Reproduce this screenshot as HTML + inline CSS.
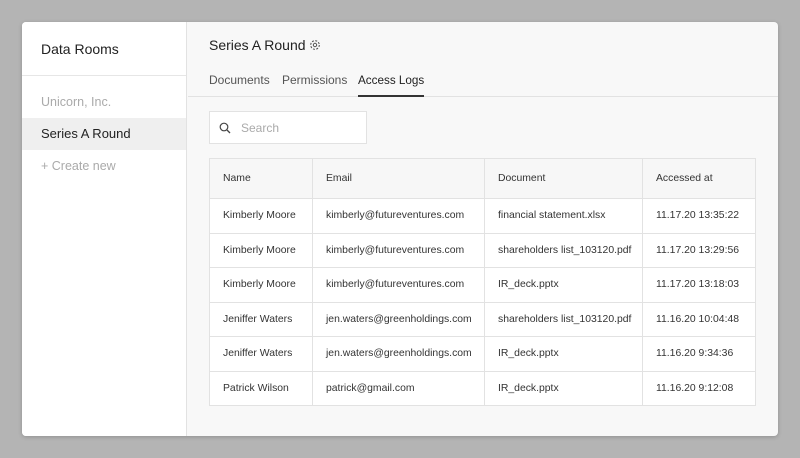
<!DOCTYPE html>
<html><head><style>
*{box-sizing:border-box;margin:0;padding:0}
body{width:800px;height:458px;background:#b4b4b4;font-family:"Liberation Sans",sans-serif;position:relative;overflow:hidden;color:#333}
.card{position:absolute;left:22px;top:22px;width:756px;height:414px;background:#f8f8f8;border-radius:4px;overflow:hidden;box-shadow:0 1px 4px rgba(0,0,0,.2)}
.side{position:absolute;left:0;top:0;width:165px;height:100%;background:#fff;border-right:1px solid #e2e2e2}
.side .h{height:54px;border-bottom:1px solid #e6e6e6;padding:19px 0 0 19px;font-size:14px;color:#222}
.side .i{height:32px;padding-left:19px;line-height:32px;font-size:12.5px}
.main{position:absolute;left:166px;top:0;right:0;height:100%}
.title{position:absolute;left:21px;top:15px;font-size:14px;color:#222}
.tabs{position:absolute;left:0;right:0;top:50px;height:25px;border-bottom:1px solid #e2e2e2}
.tab{position:absolute;top:0;height:25px;padding-top:1px;font-size:12px;line-height:14px;color:#555}
.search{position:absolute;left:21px;top:89px;width:158px;height:33px;background:#fff;border:1px solid #e2e2e2}
.search span{position:absolute;left:31px;top:9px;font-size:12px;color:#aaa}
table{position:absolute;left:21px;top:136px;width:547px;border-collapse:collapse;background:#fff;font-size:10.4px;color:#333;table-layout:fixed}
td{border:1px solid #e2e2e2;padding:0 0 0 13px;height:34.5px;white-space:nowrap;overflow:hidden}
tr.hd td{background:#f7f7f7;height:40px}
</style></head><body>
<div class="card">
<div class="side">
<div class="h">Data Rooms</div>
<div style="height:10px"></div>
<div class="i" style="color:#aaa">Unicorn, Inc.</div>
<div class="i" style="background:#efefef;color:#222;font-size:13px">Series A Round</div>
<div class="i" style="color:#aaa">+ Create new</div>
</div>
<div class="main">
<div class="title">Series A Round <svg width="12" height="12" viewBox="0 0 12 12" style="vertical-align:-1px"><circle cx="6" cy="6" r="4.3" fill="none" stroke="#555" stroke-width="1.1" stroke-dasharray="2 1.4"/><circle cx="6" cy="6" r="1.7" fill="none" stroke="#555" stroke-width="1"/></svg></div>
<div class="tabs">
<div class="tab" style="left:21px">Documents</div>
<div class="tab" style="left:94px">Permissions</div>
<div class="tab" style="left:170px;color:#222;border-bottom:2px solid #333;font-size:11.7px;padding-top:2px">Access Logs</div>
</div>
<div class="search"><svg width="12" height="12" viewBox="0 0 12 12" style="position:absolute;left:9px;top:10px"><circle cx="5" cy="5" r="3.8" fill="none" stroke="#444" stroke-width="1.2"/><path d="M8 8l3 3" stroke="#444" stroke-width="1.3"/></svg><span>Search</span></div>
<table>
<colgroup><col style="width:103px"><col style="width:172px"><col style="width:158px"><col></colgroup>
<tr class="hd"><td>Name</td><td>Email</td><td>Document</td><td>Accessed at</td></tr>
<tr><td>Kimberly Moore</td><td>kimberly@futureventures.com</td><td>financial statement.xlsx</td><td>11.17.20 13:35:22</td></tr>
<tr><td>Kimberly Moore</td><td>kimberly@futureventures.com</td><td>shareholders list_103120.pdf</td><td>11.17.20 13:29:56</td></tr>
<tr><td>Kimberly Moore</td><td>kimberly@futureventures.com</td><td>IR_deck.pptx</td><td>11.17.20 13:18:03</td></tr>
<tr><td>Jeniffer Waters</td><td>jen.waters@greenholdings.com</td><td>shareholders list_103120.pdf</td><td>11.16.20 10:04:48</td></tr>
<tr><td>Jeniffer Waters</td><td>jen.waters@greenholdings.com</td><td>IR_deck.pptx</td><td>11.16.20 9:34:36</td></tr>
<tr><td>Patrick Wilson</td><td>patrick@gmail.com</td><td>IR_deck.pptx</td><td>11.16.20 9:12:08</td></tr>
</table>
</div>
</div>
</body></html>
